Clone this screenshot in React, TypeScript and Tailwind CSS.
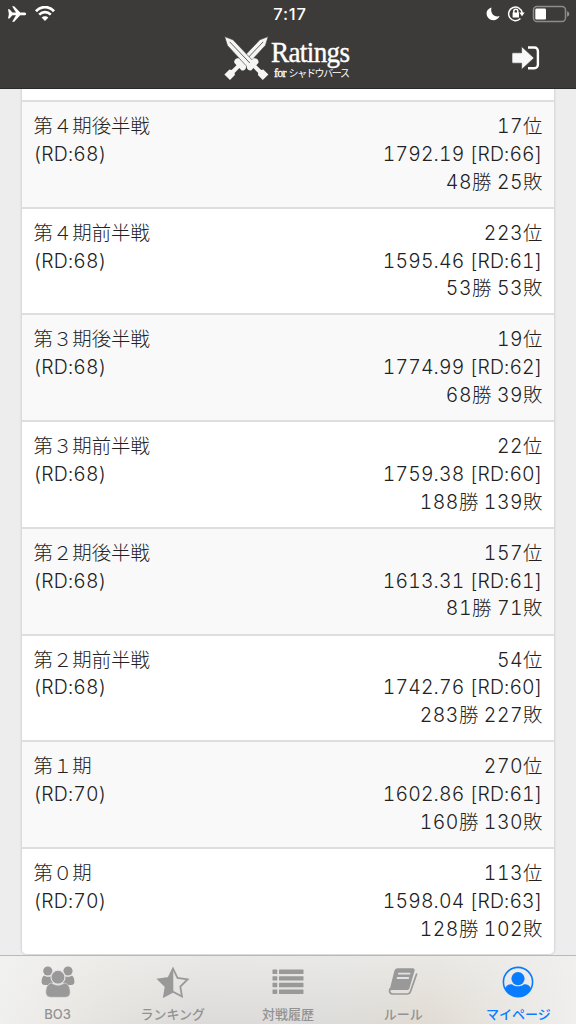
import React from 'react';

interface Season {
  name: string;
  baseRd: number;
  rank: number;
  rating: string;
  rd: number;
  wins: number;
  losses: number;
}

const seasons: Season[] = [
  { name: '第４期後半戦', baseRd: 68, rank: 17, rating: '1792.19', rd: 66, wins: 48, losses: 25 },
  { name: '第４期前半戦', baseRd: 68, rank: 223, rating: '1595.46', rd: 61, wins: 53, losses: 53 },
  { name: '第３期後半戦', baseRd: 68, rank: 19, rating: '1774.99', rd: 62, wins: 68, losses: 39 },
  { name: '第３期前半戦', baseRd: 68, rank: 22, rating: '1759.38', rd: 60, wins: 188, losses: 139 },
  { name: '第２期後半戦', baseRd: 68, rank: 157, rating: '1613.31', rd: 61, wins: 81, losses: 71 },
  { name: '第２期前半戦', baseRd: 68, rank: 54, rating: '1742.76', rd: 60, wins: 283, losses: 227 },
  { name: '第１期', baseRd: 70, rank: 270, rating: '1602.86', rd: 61, wins: 160, losses: 130 },
  { name: '第０期', baseRd: 70, rank: 113, rating: '1598.04', rd: 63, wins: 128, losses: 102 },
];

const StatusBar: React.FC = () => (
  <div className="grid h-7 grid-cols-3 items-center pl-[7px] pr-[6px]">
    <div className="flex items-center gap-[8px]">
      <svg width="20" height="18" viewBox="0 0 20 18" fill="white">
        <path d="M1 4.2h1.5L5.4 7.6H9L5.1 1.2h2.1l6 6.4h3.9c1.3 0 2 .6 2 1.3s-.7 1.4-2 1.4h-3.9l-6 6.4H5.1L9 10.3H5.4l-2.9 3.3H1l.9-4.7z" />
      </svg>
      <svg width="20" height="16" viewBox="0 0 20 16" fill="none" stroke="white">
        <path d="M1 5.2C6-.2 14-.2 19 5.2" strokeWidth="2.8" />
        <path d="M4.2 8.6c3.4-3.3 8.2-3.3 11.6 0" strokeWidth="2.6" />
        <path d="M10 15l-3.4-3.4c1.9-1.8 4.9-1.8 6.8 0z" fill="white" stroke="none" />
      </svg>
    </div>
    <div className="pl-[3px] pt-px text-center text-[16.5px] font-medium leading-none tracking-[0.8px]">7:17</div>
    <div className="flex items-center justify-end">
      <svg className="-mr-[6px]" width="92" height="20" viewBox="484 4 92 20">
        <path d="M491.5 7.6c-3.8 1.2-5.3 4-4.8 7 .5 3.3 3.2 5.7 6.5 5.7 3 0 5.5-1.7 6.4-4.2-4.8 1.7-9.8-2.3-8.1-8.5z" fill="white" />
        <g fill="none" stroke="white" strokeWidth="1.5">
          <path d="M520.4 18.6A6.8 6.8 0 1 1 522.2 13" />
          <path d="M513.8 13v-1.8a2 2 0 0 1 4 0V13" />
        </g>
        <path d="M512.6 12.5h6.4v5h-6.4zM519.3 12.4h5.4l-2.7 3.8z" fill="white" />
        <rect x="533.5" y="6.5" width="32" height="15" rx="3.4" fill="none" stroke="#8c8b88" strokeWidth="1.5" />
        <rect x="535.3" y="8.5" width="10.7" height="11" rx="1.3" fill="white" />
        <path d="M567 11.3c1.7.4 2.3 1.3 2.3 2.7s-.6 2.3-2.3 2.7z" fill="#8c8b88" />
      </svg>
    </div>
  </div>
);

const Sword: React.FC = () => (
  <>
    <path d="M0 0l8.4 3.2L30 26l-6 5.8L2.8 8.8z" fill="#f5f5f3" stroke="#3c3b39" strokeWidth=".6" />
    <path d="M5 5.2l20.4 21.4" stroke="#3c3b39" strokeWidth=".8" />
    <path d="M28 22c3.8-1 6.4 1.1 5.9 4.2l-2.2 2.5 4.9 4.6 2.1-.3 5.1 4.8-5.6 5.6-4.9-4.9.3-2.2-4.8-4.8-2.2 2.4c-3.2.4-5.3-2.3-4.2-5.6 2.9-.8 4.9-3 5.6-6.3z" fill="#f5f5f3" />
  </>
);

const Header: React.FC = () => (
  <header className="h-[89px] shrink-0 border-b border-[#2b2a28] bg-[#3c3b39] font-['Inter','Noto_Sans_CJK_JP',sans-serif] text-white">
    <StatusBar />
    <div className="grid h-[60px] grid-cols-[1fr_128px_1fr] items-center">
      <span />
      <div className="flex h-12 items-center">
        <svg className="shrink-0" width="45" height="45" viewBox="0 0 45 45" fill="none">
          <g transform="translate(44.2 .6) scale(-1 1)">
            <Sword />
          </g>
          <g transform="translate(.6 .6)">
            <Sword />
          </g>
        </svg>
        <div className="w-[84px] pl-[2px] font-['Liberation_Serif','Noto_Sans_CJK_JP',serif]">
          <div className="origin-left scale-x-[0.92] whitespace-nowrap text-[29.5px] leading-[30px] tracking-[-0.7px] [-webkit-text-stroke:0.4px_white]">Ratings</div>
          <div className="flex items-baseline whitespace-nowrap pl-[3px] leading-[13px]">
            <span className="text-[12px] tracking-[-0.8px] [-webkit-text-stroke:0.3px_white]">for</span>
            <span className="pl-[3px] text-[10px] tracking-[-1.35px]">シャドウバース</span>
          </div>
        </div>
      </div>
      <button className="justify-self-end pr-[36px]" aria-label="ログイン">
        <svg width="28" height="24" viewBox="0 0 28 24">
          <path d="M16 1.5h6.5a3.4 3.4 0 0 1 3.4 3.4v13.9a3.4 3.4 0 0 1-3.4 3.4H16" fill="none" stroke="white" strokeWidth="2.4" />
          <path d="M1 6.8h8.6V.6L22 12 9.6 23.4v-6.2H1a1 1 0 0 1-1-1V7.8a1 1 0 0 1 1-1z" fill="#f8f8f8" stroke="#3c3b39" strokeWidth=".6" />
        </svg>
      </button>
    </div>
  </header>
);

const Num: React.FC<{ children: React.ReactNode }> = ({ children }) => (
  <span className="tabular-nums tracking-[0.55px]">{children}</span>
);

const SeasonRow: React.FC<{ season: Season; shaded: boolean }> = ({ season, shaded }) => (
  <li className={`flex h-[106.72px] justify-between border-t-2 border-[#dedede] px-[11.5px] pt-[11px] ${shaded ? 'bg-[#f9f9f9]' : 'bg-white'}`}>
    <div>
      <div>{season.name}</div>
      <div className="tracking-[0.2px] tabular-nums">(RD:{season.baseRd})</div>
    </div>
    <div className="text-right">
      <div><Num>{season.rank}</Num>位</div>
      <div className="tracking-[0.15px] tabular-nums">{season.rating} [RD:{season.rd}]</div>
      <div><Num>{season.wins}</Num>勝 <Num>{season.losses}</Num>敗</div>
    </div>
  </li>
);

const GroupIcon = () => (
  <svg width="34" height="32" viewBox="0 0 34 32" fill="#999">
    <circle cx="6.8" cy="5" r="4.6" />
    <circle cx="27" cy="5" r="4.6" />
    <path d="M3 9.5c2 1.5 4.8 1.8 7 .7.2 3 1.3 5.2 3 6.8-2 .2-3.7.9-4.9 2H3.8C1.7 19 .6 18 .6 16c0-2.7.5-5.3 2.4-6.5zM31 9.5c-2 1.5-4.8 1.8-7 .7-.2 3-1.3 5.2-3 6.8 2 .2 3.7.9 4.9 2h4.3c2.1 0 3.2-1 3.2-3 0-2.7-.5-5.3-2.4-6.5z" />
    <circle cx="17" cy="11.2" r="7" stroke="#e4e4e2" strokeWidth="1.2" />
    <path d="M10.8 17.1c3.6 2.8 8.8 2.8 12.4 0 4.3.3 6 4.4 6 9.3 0 3.2-2 4.9-5.2 4.9H10c-3.2 0-5.2-1.7-5.2-4.9 0-4.9 1.7-9 6-9.3z" stroke="#e4e4e2" strokeWidth=".6" />
  </svg>
);

const StarIcon = () => (
  <svg width="34" height="32" viewBox="0 0 34 32">
    <path d="M17 2.6l4.5 9.3 10.1 1.5-7.3 7.1 1.7 10-9-4.7-9 4.7 1.7-10-7.3-7.1 10.1-1.5z" fill="none" stroke="#999" strokeWidth="1.8" />
    <path d="M17.3 2v23.9L8 30.5l1.7-10-7.3-7.1 10.1-1.5z" fill="#999" />
  </svg>
);

const ListIcon = () => (
  <svg width="32" height="32" viewBox="0 0 32 32" fill="#999">
    {[3.6, 10.2, 16.8, 23.5].map(y => (
      <React.Fragment key={y}>
        <rect x=".5" y={y} width="4.8" height="4.4" rx=".6" />
        <rect x="7" y={y} width="24.5" height="4.4" rx=".6" />
      </React.Fragment>
    ))}
  </svg>
);

const BookIcon = () => (
  <svg width="30" height="32" viewBox="0 0 30 32">
    <path d="M9.6 2.2h15c1.7 0 2.4 1 2 2.5L21.5 22c-.4 1.4-1.2 2-2.6 2H4.6C3.2 24 2 24.4 1.2 25.6L6.4 4.8c.5-1.7 1.5-2.6 3.2-2.6z" fill="#999" />
    <path d="M2 22.8c-1.3 3 .1 5.2 2.8 5.2H19c1.5 0 2.9-.8 3.4-2.2L28.6 8" fill="none" stroke="#999" strokeWidth="1.7" strokeLinecap="round" />
    <path d="M10.8 7.6h10.8M9.5 12h10.8" stroke="#e2e2e0" strokeWidth="1.8" strokeLinecap="round" />
  </svg>
);

const PersonIcon = () => (
  <svg width="32" height="32" viewBox="0 0 32 32">
    <circle cx="16" cy="16" r="14.6" fill="none" stroke="#087cff" strokeWidth="1.6" />
    <circle cx="16" cy="12.6" r="6.6" fill="#087cff" />
    <path d="M3.1 23c.8-3.6 3.4-5 7-4.7 2.4 2.7 9.4 2.7 11.8 0 3.6-.3 6.2 1.1 7 4.7A14.8 14.8 0 0 1 3.1 23z" fill="#087cff" />
  </svg>
);

const tabs = [
  { label: 'BO3', icon: GroupIcon },
  { label: 'ランキング', icon: StarIcon },
  { label: '対戦履歴', icon: ListIcon },
  { label: 'ルール', icon: BookIcon },
  { label: 'マイページ', icon: PersonIcon, active: true },
];

const TabBar: React.FC = () => (
  <nav className="h-[69px] shrink-0 border-t border-[#b9b9b8] bg-[linear-gradient(100deg,#f1f1f0_0%,#e6e4df_18%,#dcdbd9_35%,#dcdcda_57%,#e0dbd3_74%,#e7e4df_86%,#efefee_100%)] font-['Inter','Noto_Sans_CJK_JP',sans-serif]">
    <div className="grid h-full grid-cols-5 bg-linear-to-b from-[#f1f1f0]/60 to-[#f1f1f0]/0">
      {tabs.map(tab => (
        <button key={tab.label} className={`flex flex-col items-center pt-[10px] ${tab.active ? 'text-[#087cff]' : 'text-[#929292]'}`}>
          <tab.icon />
          <span className="mt-[7px] whitespace-nowrap text-[13px] font-medium leading-[18px]">{tab.label}</span>
        </button>
      ))}
    </div>
  </nav>
);

const App: React.FC = () => (
  <div className="flex h-[1024px] w-[576px] flex-col overflow-hidden bg-[#ededed]">
    <Header />
    <main className="min-h-0 flex-1 overflow-hidden px-[22px]">
      <div className="h-[865px] overflow-hidden rounded-b-[5px] bg-white shadow-[0_0_2px_1px_#d4d4d4]">
        <div className="h-[11px]" />
        <ul className="font-['Inter','Noto_Sans_CJK_JP',sans-serif] text-[19.4px] font-light leading-[27.8px] text-[#222]">
          {seasons.map((season, i) => (
            <SeasonRow key={season.name} season={season} shaded={i % 2 === 0} />
          ))}
        </ul>
      </div>
    </main>
    <TabBar />
  </div>
);

export default App;
